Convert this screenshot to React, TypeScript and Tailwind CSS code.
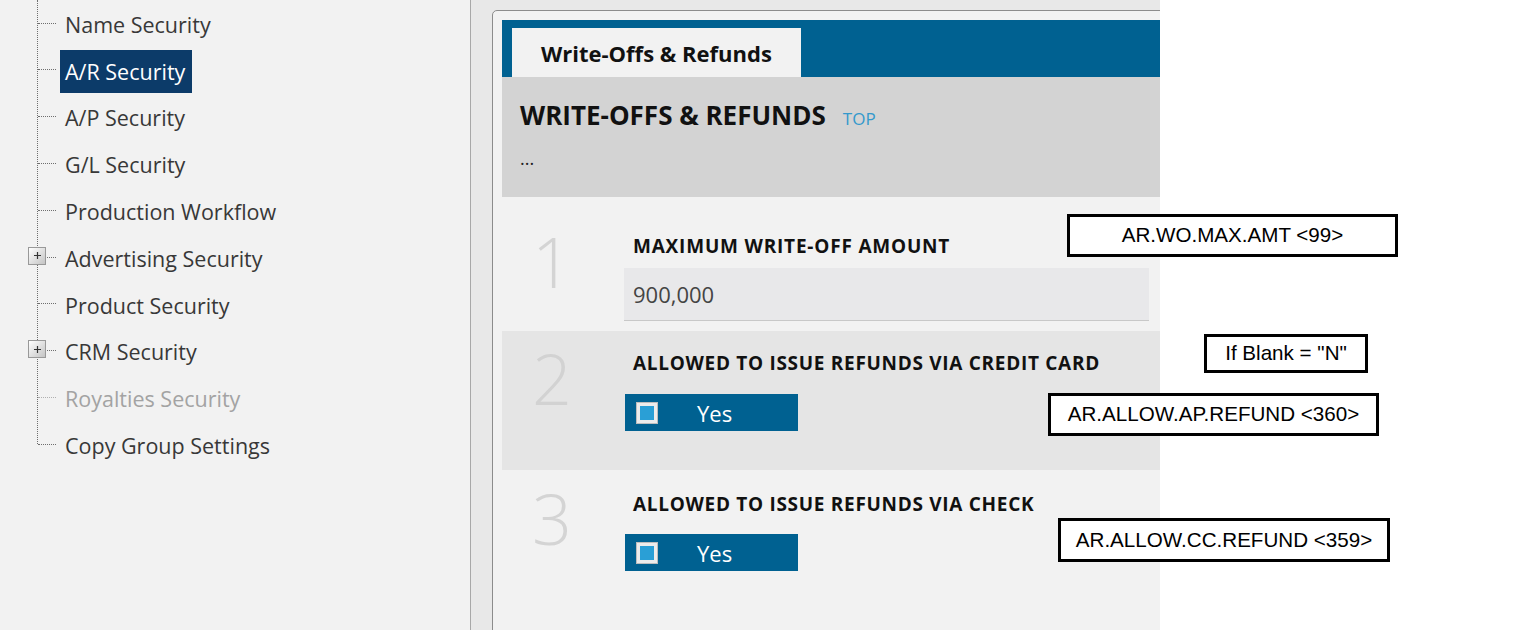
import React from "react";

interface ITreeItem {
  label: string;
  selected?: boolean;
  expandable?: boolean;
  disabled?: boolean;
}

const treeItems: ITreeItem[] = [
  { label: "Name Security" },
  { label: "A/R Security", selected: true },
  { label: "A/P Security" },
  { label: "G/L Security" },
  { label: "Production Workflow" },
  { label: "Advertising Security", expandable: true },
  { label: "Product Security" },
  { label: "CRM Security", expandable: true },
  { label: "Royalties Security", disabled: true },
  { label: "Copy Group Settings" },
];

const PlusBox = () => (
  <div className="absolute left-[28px] top-[11px] flex h-[18px] w-[18px] items-center justify-center border border-[#999] bg-gradient-to-br from-[#ffffff] to-[#c4c4c4]">
    <svg width="9" height="9" viewBox="0 0 9 9">
      <path d="M4.5 1v7M1 4.5h7" stroke="#333" strokeWidth="1.2" />
    </svg>
  </div>
);

const TreeRow = ({ item }: { item: ITreeItem }) => (
  <div className="flex h-[46.8px] items-center">
    <div className="relative h-full w-[60px] shrink-0">
      <div
        className={
          item.disabled
            ? "absolute left-[38px] top-[21px] w-[18px] border-t border-dotted border-[#b0b0b0]"
            : "absolute left-[38px] top-[21px] w-[18px] border-t border-dotted border-[#6e6e6e]"
        }
      />
      {item.expandable && <PlusBox />}
    </div>
    <span
      className={
        item.selected
          ? "flex h-[43px] items-center bg-[#0c3b69] pl-[5px] pr-[7px] text-white"
          : item.disabled
          ? "flex h-[43px] items-center px-[5px] text-[#a3a3a3]"
          : "flex h-[43px] items-center px-[5px] text-[#383838]"
      }
    >
      {item.label}
    </span>
  </div>
);

const Checkbox = () => (
  <div className="h-[22px] w-[22px] border border-[#bdbdbd] bg-[#ececec] p-[3px]">
    <div className="h-full w-full bg-[#2a9fd6]" />
  </div>
);

const YesButton = () => (
  <div className="ml-[1px] flex h-[37px] w-[173px] items-center bg-[#006191] pl-[11px] text-[22px] text-white">
    <Checkbox />
    <span className="ml-[39px] leading-none">Yes</span>
  </div>
);

const Annotation = ({ text, className }: { text: string; className: string }) => (
  <div
    className={
      "absolute flex items-center justify-center border-[3px] border-black bg-white text-[20.6px] text-black " +
      className
    }
    style={{ fontFamily: '"Liberation Sans", Arial, sans-serif' }}
  >
    {text}
  </div>
);

export default function App() {
  return (
    <div
      className="relative flex h-[630px] w-[1527px] overflow-hidden bg-white"
      style={{ fontFamily: '"Open Sans", "Noto Sans", sans-serif' }}
    >
      {/* tree */}
      <div className="relative h-full w-[471px] shrink-0 border-r border-[#a8a8a8] bg-[#f2f2f2] pt-[1.6px] text-[21.5px]">
        <div className="absolute left-[37px] top-0 h-[444px] border-l border-dotted border-[#6e6e6e]" />
        {treeItems.map((item) => (
          <TreeRow key={item.label} item={item} />
        ))}
      </div>

      {/* main */}
      <div className="h-full w-[689px] shrink-0 overflow-hidden bg-[#e8e8e8] pl-[21px] pt-[10px]">
        <div className="h-[700px] w-[720px] rounded-[5px] border border-[#8c8c8c] bg-[#f2f2f2] p-[9px]">
          <div className="flex h-[57px] items-end bg-[#006191] pl-[10px]">
            <div className="flex h-[49px] w-[289px] items-center bg-[#f2f2f2] pl-[29px] pt-[2px] text-[22px] font-bold text-[#111]">
              Write-Offs &amp; Refunds
            </div>
          </div>

          <div className="h-[120px] bg-[#d3d3d3] pl-[18px] pt-[21px]">
            <div className="flex items-baseline">
              <span className="text-[26px] font-bold leading-[34px] text-[#111]">WRITE-OFFS &amp; REFUNDS</span>
              <span className="ml-[17px] text-[17px] text-[#3399cc]">TOP</span>
            </div>
            <div className="mt-[14px] text-[18px] leading-[24px] text-[#222]">...</div>
          </div>

          {/* row 1 */}
          <div className="flex h-[134px] bg-[#f2f2f2] pt-[37px]">
            <div className="w-[122px] shrink-0 pl-[30px] pt-[2px] text-[70px] font-light leading-[50px] text-[#d4d4d4]">1</div>
            <div>
              <div className="pl-[9px] text-[19px] font-bold leading-[24px] tracking-[0.8px] text-[#111]">MAXIMUM WRITE-OFF AMOUNT</div>
              <div className="mt-[10px] flex h-[53px] w-[525px] items-center border-b border-[#c8c8c8] bg-[#e8e8ea] pl-[9px] text-[22px] text-[#444]">
                900,000
              </div>
            </div>
          </div>

          {/* row 2 */}
          <div className="flex h-[139px] bg-[#e5e5e5] pt-[20px]">
            <div className="w-[122px] shrink-0 pl-[30px] pt-[2px] text-[70px] font-light leading-[50px] text-[#d2d2d2]">2</div>
            <div>
              <div className="pl-[9px] text-[19px] font-bold leading-[24px] tracking-[0.7px] text-[#111]">ALLOWED TO ISSUE REFUNDS VIA CREDIT CARD</div>
              <div className="mt-[19px]">
                <YesButton />
              </div>
            </div>
          </div>

          {/* row 3 */}
          <div className="flex bg-[#f2f2f2] pt-[22px]">
            <div className="w-[122px] shrink-0 pl-[30px] pt-[1px] text-[70px] font-light leading-[50px] text-[#d4d4d4]">3</div>
            <div>
              <div className="pl-[9px] text-[19px] font-bold leading-[24px] tracking-[0.7px] text-[#111]">ALLOWED TO ISSUE REFUNDS VIA CHECK</div>
              <div className="mt-[18px]">
                <YesButton />
              </div>
            </div>
          </div>
        </div>
      </div>

      <Annotation text="AR.WO.MAX.AMT <99>" className="left-[1067px] top-[214px] h-[43px] w-[331px]" />
      <Annotation text={'If Blank = "N"'} className="left-[1204px] top-[334px] h-[39px] w-[164px]" />
      <Annotation text="AR.ALLOW.AP.REFUND <360>" className="left-[1048px] top-[393px] h-[43px] w-[331px]" />
      <Annotation text="AR.ALLOW.CC.REFUND <359>" className="left-[1058px] top-[518px] h-[44px] w-[332px]" />
    </div>
  );
}
